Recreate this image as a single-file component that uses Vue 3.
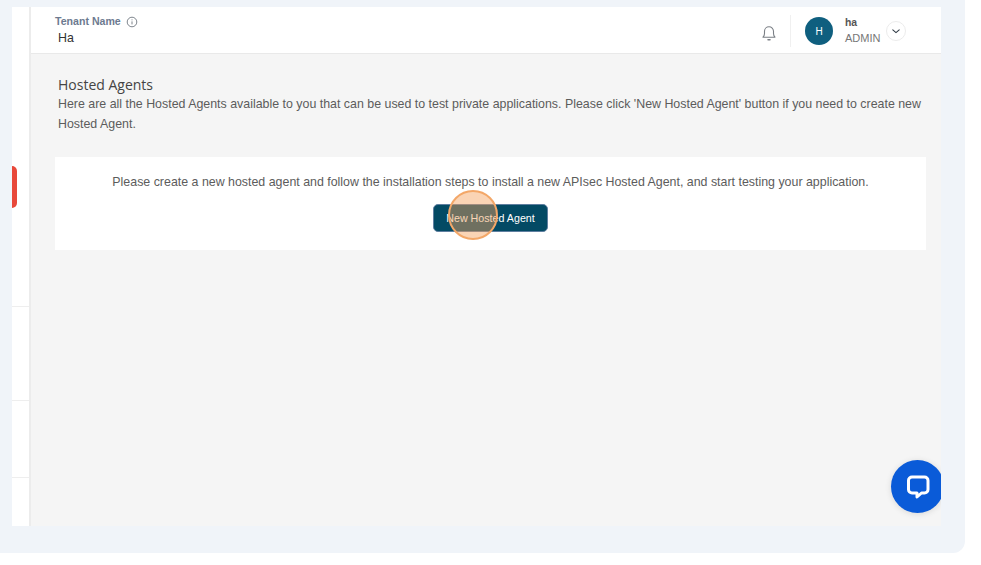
<script setup>
const sidebarRows = [
  { id: 'a', height: 94 },
  { id: 'b', height: 77 },
  { id: 'c', height: 49 },
]
</script>

<template>
  <div class="page">
    <div class="frame">
      <div class="app">
        <aside class="sidebar">
          <div class="top-block">
            <span class="marker"></span>
          </div>
          <div v-for="row in sidebarRows" :key="row.id" class="side-row" :style="{ height: row.height + 'px' }"></div>
        </aside>
        <div class="main">
          <header class="topbar">
            <div class="tenant">
              <div class="tenant-label">
                <span>Tenant Name</span>
                <svg class="info" viewBox="0 0 12 12" width="12" height="12" fill="none" stroke="#6f7780" stroke-width="0.9">
                  <circle cx="6" cy="6" r="4.8" />
                  <path d="M6 5.4v3" />
                  <path d="M6 3.4v.9" />
                </svg>
              </div>
              <div class="tenant-value">Ha</div>
            </div>
            <div class="user-area">
              <svg class="bell" viewBox="0 0 16 18" width="16" height="18" fill="none" stroke="#7a7f85" stroke-width="1.1" stroke-linejoin="round" stroke-linecap="round">
                <path d="M2 13.2c1-1 1.5-2 1.5-3.6V7.2a4.5 4.5 0 0 1 9 0v2.4c0 1.6.5 2.600 1.500 3.600z" />
                <path d="M7 15.800h2" stroke-width="1.500" />
              </svg>
              <span class="divider"></span>
              <span class="avatar">H</span>
              <div class="user">
                <div class="user-name">ha</div>
                <div class="user-role">ADMIN</div>
              </div>
              <span class="caret">
                <svg viewBox="0 0 10 6" width="8" height="5" fill="none" stroke="#2f3a44" stroke-width="1.300" stroke-linecap="round" stroke-linejoin="round">
                  <path d="M1 1l4 3.500L9 1" />
                </svg>
              </span>
            </div>
          </header>
          <section class="content">
            <h1 class="title">Hosted Agents</h1>
            <p class="desc">Here are all the Hosted Agents available to you that can be used to test private applications. Please click 'New Hosted Agent' button if you need to create new Hosted Agent.</p>
            <div class="card">
              <p class="card-text">Please create a new hosted agent and follow the installation steps to install a new APIsec Hosted Agent, and start testing your application.</p>
              <div class="button-wrap">
                <button class="primary">New Hosted Agent</button>
                <span class="highlight"></span>
              </div>
            </div>
          </section>
          <div class="chat">
            <svg viewBox="0 0 26 26" width="26" height="26" fill="none">
              <path d="M7 3h12.500a3.500 3.500 0 0 1 3.500 3.500v9a3.500 3.500 0 0 1-3.500 3.500h-3l-4.500 4v-4H7a3.500 3.500 0 0 1-3.500-3.500v-9A3.500 3.500 0 0 1 7 3z" stroke="#fff" stroke-width="3" stroke-linejoin="round" />
            </svg>
          </div>
        </div>
      </div>
    </div>
  </div>
</template>

<style>
html, body { margin: 0; background: #fff; }
</style>

<style scoped>
.page {
  width: 981px;
  height: 565px;
  overflow: hidden;
  background: #fff;
  font-family: "Liberation Sans", Arial, sans-serif;
}
.frame {
  width: 965px;
  height: 553px;
  box-sizing: border-box;
  padding: 7px 24px 27px 12px;
  background: #f0f4f9;
  border-bottom-right-radius: 12px;
}
.app {
  display: flex;
  height: 519px;
  overflow: hidden;
  background: #fff;
}
.sidebar {
  width: 17px;
  flex: none;
  display: flex;
  flex-direction: column;
  background: #fff;
}
.top-block {
  height: 299px;
  box-sizing: border-box;
  padding-top: 159px;
}
.marker {
  display: block;
  width: 5px;
  height: 42px;
  background: #e8483a;
  border-radius: 0 5px 5px 0;
}
.side-row {
  box-sizing: border-box;
  border-top: 1px solid #eeeeee;
}
.main {
  position: relative;
  flex: 1;
  min-width: 0;
  display: flex;
  flex-direction: column;
  border-left: 2px solid #ececec;
  background: #f5f5f5;
}
.topbar {
  height: 47px;
  flex: none;
  box-sizing: border-box;
  display: flex;
  align-items: flex-start;
  justify-content: space-between;
  background: #fff;
  border-bottom: 1px solid #e9e9e9;
  padding: 8px 35px 0 24px;
}
.tenant-label {
  display: flex;
  align-items: center;
  gap: 5px;
  font-size: 10.6px;
  font-weight: 700;
  line-height: 13px;
  color: #6d7a90;
}
.tenant-value {
  margin-top: 3px;
  padding-left: 3px;
  font-size: 12.4px;
  line-height: 14px;
  color: #333;
}
.user-area {
  display: flex;
  align-items: center;
  height: 32px;
}
.bell {
  margin-top: 3px;
}
.divider {
  width: 1px;
  height: 32px;
  margin: 0 14px 0 13px;
  background: #f0f0f0;
}
.avatar {
  width: 28px;
  height: 28px;
  border-radius: 50%;
  background: #0f5f7f;
  color: #fff;
  font-size: 10px;
  display: flex;
  align-items: center;
  justify-content: center;
}
.user {
  margin-left: 12px;
  width: 36px;
}
.user-name {
  font-size: 10.4px;
  font-weight: 700;
  line-height: 14px;
  color: #555;
}
.user-role {
  font-size: 11px;
  line-height: 16px;
  color: #777;
}
.caret {
  width: 20px;
  height: 20px;
  box-sizing: border-box;
  margin-left: 5px;
  border: 1px solid #ececec;
  border-radius: 50%;
  display: flex;
  align-items: center;
  justify-content: center;
}
.content {
  flex: 1;
  padding: 23px 15px 0 27px;
}
.title {
  margin: 0;
  font-family: "Open Sans", sans-serif;
  font-size: 14px;
  font-weight: 500;
  line-height: 16px;
  color: #444;
}
.desc {
  margin: 1px 0 0;
  font-size: 12.4px;
  line-height: 20px;
  color: #5c5c5c;
}
.card {
  margin: 23px 0 0 -3px;
  width: 871px;
  height: 93px;
  box-sizing: border-box;
  padding-top: 18px;
  background: #fff;
  text-align: center;
}
.card-text {
  margin: 0;
  font-size: 12.4px;
  line-height: 15px;
  color: #5c5c5c;
}
.button-wrap {
  position: relative;
  width: 115px;
  margin: 14px auto 0;
}
.primary {
  display: block;
  width: 115px;
  height: 28px;
  padding: 0;
  border: 1px solid #5f7fa0;
  border-radius: 5px;
  background: #034a64;
  color: #fff;
  font-family: "Liberation Sans", Arial, sans-serif;
  font-size: 10.7px;
}
.highlight {
  position: absolute;
  left: 15px;
  top: -14px;
  width: 50px;
  height: 50px;
  box-sizing: border-box;
  border: 2px solid #f3a768;
  border-radius: 50%;
  background: rgba(245, 160, 90, 0.45);
}
.chat {
  position: absolute;
  left: 860px;
  top: 453px;
  width: 53px;
  height: 53px;
  border-radius: 50%;
  background: #0a5bd8;
  box-shadow: 0 1px 6px rgba(0, 0, 0, 0.12);
  display: flex;
  align-items: center;
  justify-content: center;
}
</style>
